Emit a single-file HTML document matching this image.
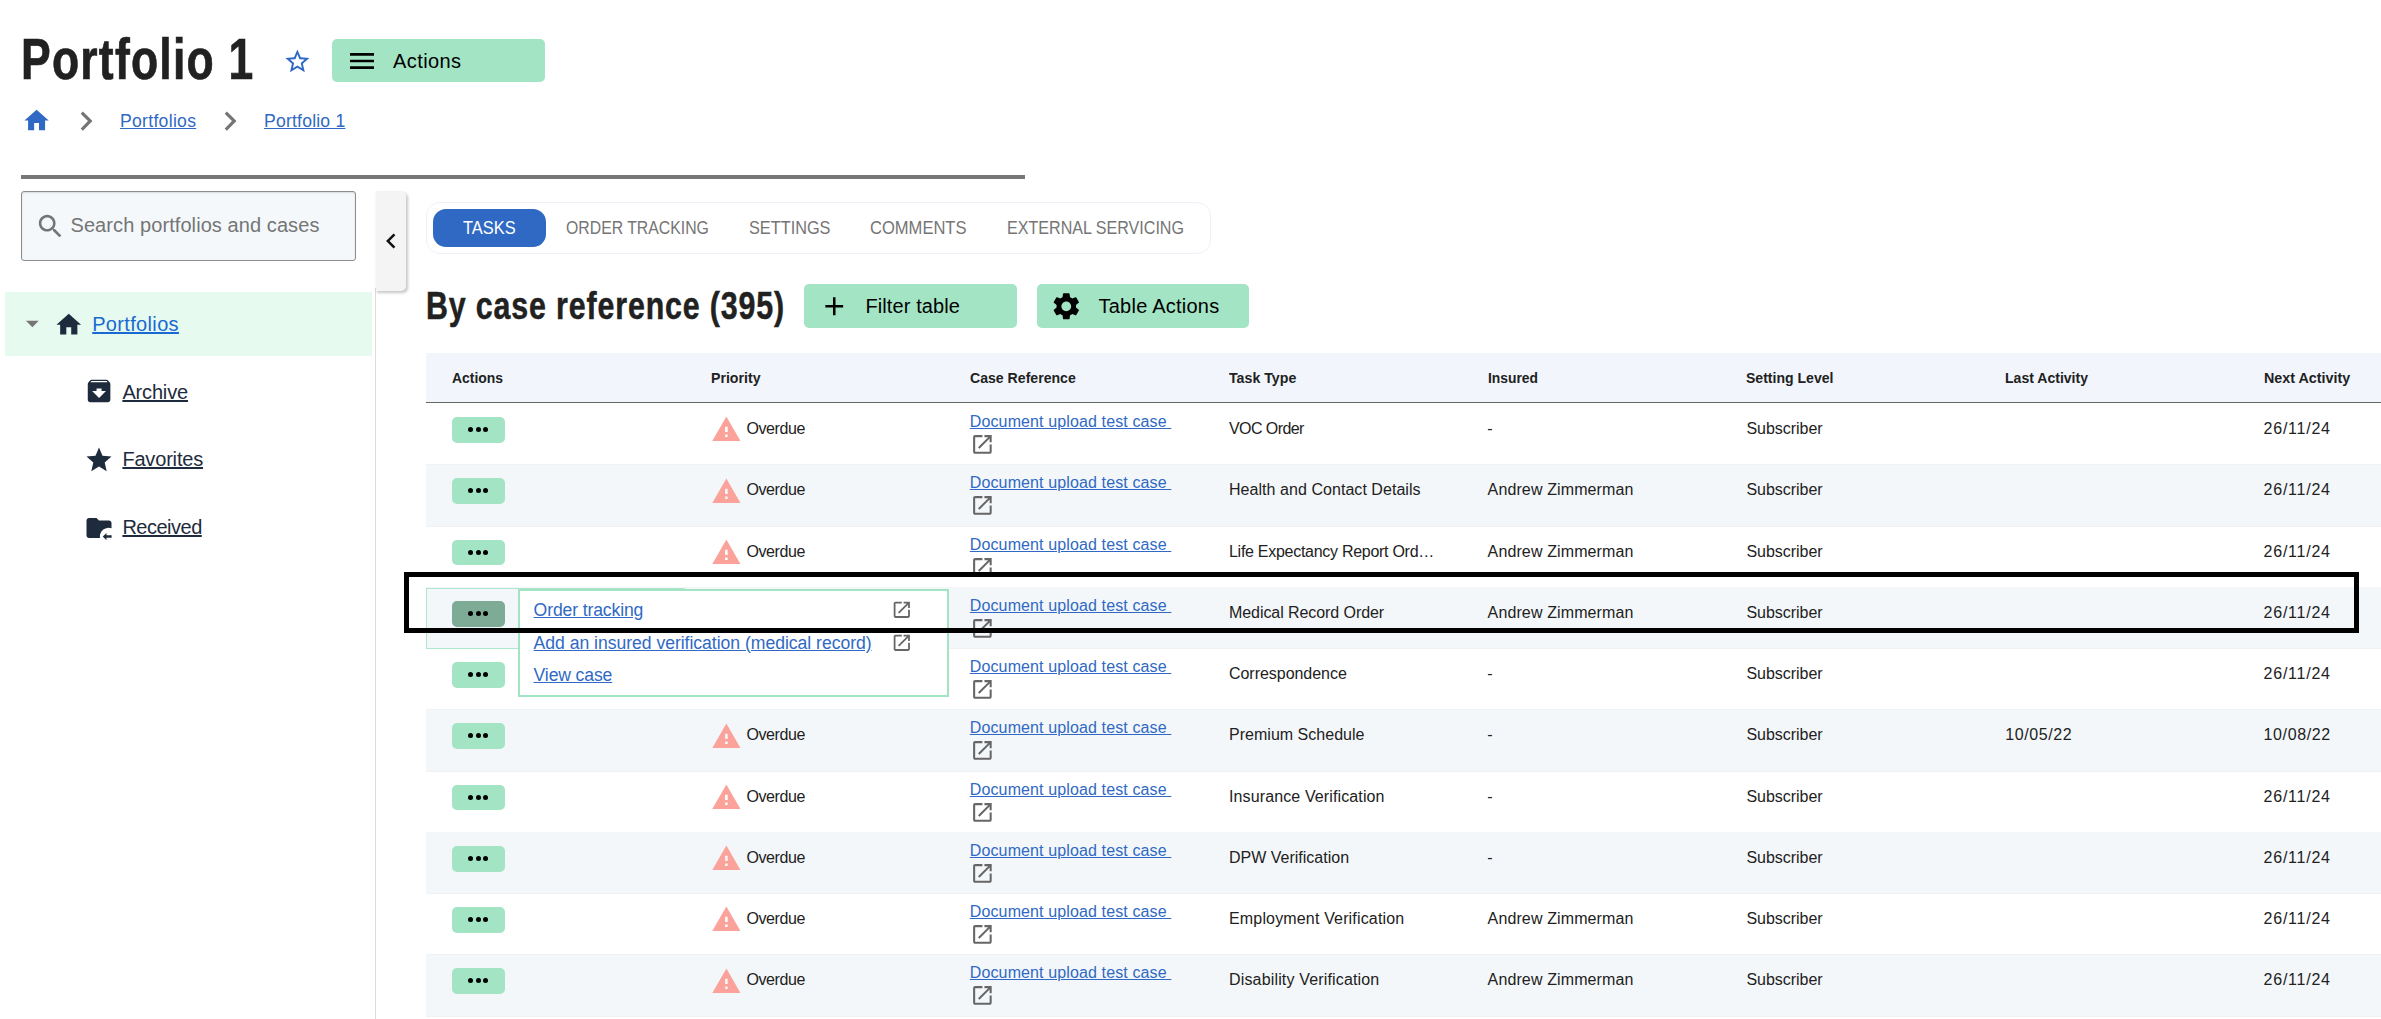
<!DOCTYPE html>
<html lang="en"><head><meta charset="utf-8"><title>Portfolio 1</title>
<style>
html,body{margin:0;padding:0;background:#fff;}
body{width:2381px;height:1019px;position:relative;overflow:hidden;font-family:"Liberation Sans", sans-serif;}
body>div,body>svg,body>span,body>a{position:absolute;display:block;box-sizing:border-box;}
span,a{white-space:pre;transform-origin:0 50%;text-decoration:none;}
a{text-decoration:underline;}
i{display:inline-block;width:0;height:0;}
</style></head><body>
<span style="left:20.5px;top:18px;font-size:58px;line-height:81px;color:#212121;font-weight:bold;transform:scaleX(0.7671);-webkit-text-stroke:0.7px #212121;letter-spacing:1.6px;">Portfolio 1</span>
<svg viewBox="0 0 24 24" style="left:282.6px;top:46.6px;width:28.8px;height:28.8px;fill:#2f69c4"><path d="M22 9.24l-7.19-.62L12 2 9.19 8.63 2 9.24l5.46 4.73L5.82 21 12 17.27 18.18 21l-1.63-7.03L22 9.24zM12 15.4l-3.76 2.27 1-4.28-3.32-2.88 4.38-.38L12 6.1l1.71 4.04 4.38.38-3.32 2.88 1 4.28L12 15.4z"/></svg>
<div style="left:332px;top:39px;width:213px;height:43px;background:#a3e4c5;border-radius:5px;"></div>
<svg viewBox="0 0 24 24" style="left:346px;top:44.5px;width:32px;height:32px;fill:#000"><path d="M3 18h18v-2H3v2zm0-5h18v-2H3v2zm0-7v2h18V6H3z"/></svg>
<span style="left:393px;top:47px;font-size:20px;line-height:28px;color:#000;letter-spacing:0.42px;">Actions</span>
<svg viewBox="0 0 24 24" style="left:21.97px;top:106.45px;width:29.16px;height:29.16px;fill:#2f69c4"><path d="M10 20v-6h4v6h5v-8h3L12 3 2 12h3v8z"/></svg>
<svg viewBox="0 0 24 24" style="left:66.92px;top:101.95px;width:38.22px;height:38.22px;fill:#757575"><path d="M10 6L8.59 7.41 13.17 12l-4.58 4.59L10 18l6-6z"/></svg>
<a style="left:120px;top:109px;font-size:17.6px;line-height:25px;color:#2f69c4;letter-spacing:0.29px;">Portfolios</a>
<svg viewBox="0 0 24 24" style="left:211.42px;top:101.95px;width:38.22px;height:38.22px;fill:#757575"><path d="M10 6L8.59 7.41 13.17 12l-4.58 4.59L10 18l6-6z"/></svg>
<a style="left:264px;top:109px;font-size:17.6px;line-height:25px;color:#2f69c4;letter-spacing:0.2px;">Portfolio 1</a>
<div style="left:21px;top:175px;width:1004px;height:3.6px;background:#777;"></div>
<div style="left:21px;top:191px;width:335px;height:70px;background:#f4f8fb;border:1px solid #8d8d8d;border-radius:3px;box-shadow:inset 0 1px 2px rgba(0,0,0,.12);"></div>
<svg viewBox="0 0 24 24" style="left:35.44px;top:211.14px;width:30.87px;height:30.87px;fill:#757575"><path d="M15.5 14h-.79l-.28-.27C15.41 12.59 16 11.11 16 9.5 16 5.91 13.09 3 9.5 3S3 5.91 3 9.5 5.91 16 9.5 16c1.61 0 3.09-.59 4.23-1.57l.27.28v.79l5 4.99L20.49 19l-4.99-5zm-6 0C7.01 14 5 11.99 5 9.5S7.01 5 9.5 5 14 7.01 14 9.5 11.99 14 9.5 14z"/></svg>
<span style="left:70.5px;top:211px;font-size:20px;line-height:28px;color:#757575;letter-spacing:0.08px;">Search portfolios and cases</span>
<div style="left:375px;top:288px;width:1px;height:731px;background:#dcdcdc;"></div>
<div style="left:376px;top:191px;width:30px;height:100px;background:#f4f4f4;border-radius:0 5px 5px 0;box-shadow:1.5px 2px 3px rgba(0,0,0,.22);"></div>
<svg viewBox="0 0 24 24" style="left:375.86px;top:225.97px;width:30.12px;height:30.12px;fill:#111"><path d="M15.41 7.41L14 6l-6 6 6 6 1.41-1.41L10.83 12z"/></svg>
<div style="left:5px;top:292px;width:367px;height:63.5px;background:#e6faf0;"></div>
<svg viewBox="0 0 24 24" style="left:16.54px;top:308.2px;width:30.72px;height:30.72px;fill:#757575"><path d="M7 10l5 5 5-5z"/></svg>
<svg viewBox="0 0 24 24" style="left:54.44px;top:310.21px;width:29.52px;height:29.52px;fill:#1e2b3c"><path d="M10 20v-6h4v6h5v-8h3L12 3 2 12h3v8z"/></svg>
<a style="left:92.2px;top:310px;font-size:20px;line-height:28px;color:#186ad2;letter-spacing:0.34px;">Portfolios</a>
<svg viewBox="0 0 24 24" style="left:84.33px;top:376.43px;width:30.13px;height:30.13px;fill:#1e2b3c"><path d="M20.54 5.23l-1.39-1.68C18.88 3.21 18.47 3 18 3H6c-.47 0-.88.21-1.16.55L3.46 5.23C3.17 5.57 3 6.02 3 6.5V19c0 1.1.9 2 2 2h14c1.1 0 2-.9 2-2V6.5c0-.48-.17-.93-.46-1.27zM12 17.5L6.5 12H10v-2h4v2h3.5L12 17.5zM5.12 5l.81-1h12l.94 1H5.12z"/></svg>
<a style="left:122.4px;top:378px;font-size:20px;line-height:28px;color:#1e2b3c;letter-spacing:-0.16px;">Archive</a>
<svg viewBox="0 0 24 24" style="left:84.4px;top:444.9px;width:30px;height:30px;fill:#1e2b3c"><path d="M12 17.27L18.18 21l-1.64-7.03L22 9.24l-7.19-.61L12 2 9.19 8.63 2 9.24l5.46 4.73L5.82 21z"/></svg>
<a style="left:122.4px;top:445px;font-size:20px;line-height:28px;color:#1e2b3c;letter-spacing:-0.18px;">Favorites</a>
<svg viewBox="0 0 24 24" style="left:84.4px;top:512.8px;width:30px;height:30px;fill:#1e2b3c"><path d="M10 4H4c-1.1 0-2 .9-2 2v12c0 1.1.9 2 2 2h8.8A7 7 0 0 1 22 12.2V8c0-1.1-.9-2-2-2h-8l-2-2z"/><path d="M22.1 17.8h-4.1v-1.9L15 18.8l3 2.9v-1.9h4.1z"/></svg>
<a style="left:122.4px;top:513px;font-size:20px;line-height:28px;color:#1e2b3c;letter-spacing:-0.5px;">Received</a>
<div style="left:426px;top:202px;width:784.5px;height:51.5px;background:#fff;border:1px solid #edf1f7;border-radius:14px;"></div>
<div style="left:433px;top:209px;width:113px;height:37.8px;background:#2f69c4;border-radius:13px;"></div>
<span style="left:463.4px;top:216px;font-size:17.6px;line-height:25px;color:#fff;transform:scaleX(0.9328);">TASKS</span>
<span style="left:565.7px;top:216px;font-size:17.6px;line-height:25px;color:#757575;transform:scaleX(0.8987);">ORDER TRACKING</span>
<span style="left:748.5px;top:216px;font-size:17.6px;line-height:25px;color:#757575;transform:scaleX(0.9263);">SETTINGS</span>
<span style="left:870px;top:216px;font-size:17.6px;line-height:25px;color:#757575;transform:scaleX(0.9403);">COMMENTS</span>
<span style="left:1006.8px;top:216px;font-size:17.6px;line-height:25px;color:#757575;transform:scaleX(0.9143);">EXTERNAL SERVICING</span>
<span style="left:425.5px;top:278px;font-size:39px;line-height:55px;color:#212121;font-weight:bold;transform:scaleX(0.7786);-webkit-text-stroke:0.5px #212121;letter-spacing:1.1px;">By case reference (395)</span>
<div style="left:804px;top:284px;width:213px;height:43.5px;background:#a3e4c5;border-radius:5px;"></div>
<svg viewBox="0 0 24 24" style="left:818.74px;top:290.84px;width:30.51px;height:30.51px;fill:#000"><path d="M19 13h-6v6h-2v-6H5v-2h6V5h2v6h6v2z"/></svg>
<span style="left:865.5px;top:292px;font-size:20px;line-height:28px;color:#000;letter-spacing:0.09px;">Filter table</span>
<div style="left:1037px;top:284px;width:212px;height:43.5px;background:#a3e4c5;border-radius:5px;"></div>
<svg viewBox="0 0 24 24" style="left:1050.21px;top:289.98px;width:32.59px;height:32.59px;fill:#000"><path d="M19.14 12.94c.04-.3.06-.61.06-.94 0-.32-.02-.64-.07-.94l2.03-1.58c.18-.14.23-.41.12-.61l-1.92-3.32c-.12-.22-.37-.29-.59-.22l-2.39.96c-.5-.38-1.03-.7-1.62-.94l-.36-2.54c-.04-.24-.24-.41-.48-.41h-3.84c-.24 0-.43.17-.47.41l-.36 2.54c-.59.24-1.13.57-1.62.94l-2.39-.96c-.22-.08-.47 0-.59.22L2.74 8.87c-.12.21-.08.47.12.61l2.03 1.58c-.05.3-.09.63-.09.94s.02.64.07.94l-2.03 1.58c-.18.14-.23.41-.12.61l1.92 3.32c.12.22.37.29.59.22l2.39-.96c.5.38 1.03.7 1.62.94l.36 2.54c.05.24.24.41.48.41h3.84c.24 0 .44-.17.47-.41l.36-2.54c.59-.24 1.13-.56 1.62-.94l2.39.96c.22.08.47 0 .59-.22l1.92-3.32c.12-.22.07-.47-.12-.61l-2.01-1.58zM12 15.6c-1.98 0-3.6-1.62-3.6-3.6s1.62-3.6 3.6-3.6 3.6 1.62 3.6 3.6-1.62 3.6-3.6 3.6z"/></svg>
<span style="left:1098.5px;top:292px;font-size:20px;line-height:28px;color:#000;letter-spacing:0.24px;">Table Actions</span>
<div style="left:426px;top:353px;width:1955px;height:49.5px;background:#f2f6fc;"></div>
<div style="left:426px;top:402px;width:1955px;height:1px;background:#666;"></div>
<span style="left:452.3px;top:367px;font-size:15px;line-height:21px;color:#212121;font-weight:bold;transform:scaleX(0.9270);">Actions</span>
<span style="left:711px;top:367px;font-size:15px;line-height:21px;color:#212121;font-weight:bold;transform:scaleX(0.9426);">Priority</span>
<span style="left:970px;top:367px;font-size:15px;line-height:21px;color:#212121;font-weight:bold;transform:scaleX(0.9398);">Case Reference</span>
<span style="left:1229px;top:367px;font-size:15px;line-height:21px;color:#212121;font-weight:bold;transform:scaleX(0.9460);">Task Type</span>
<span style="left:1487.6px;top:367px;font-size:15px;line-height:21px;color:#212121;font-weight:bold;transform:scaleX(0.9227);">Insured</span>
<span style="left:1746.4px;top:367px;font-size:15px;line-height:21px;color:#212121;font-weight:bold;transform:scaleX(0.9362);">Setting Level</span>
<span style="left:2005.2px;top:367px;font-size:15px;line-height:21px;color:#212121;font-weight:bold;transform:scaleX(0.9364);">Last Activity</span>
<span style="left:2263.6px;top:367px;font-size:15px;line-height:21px;color:#212121;font-weight:bold;transform:scaleX(0.9534);">Next Activity</span>
<div style="left:426px;top:464.35px;width:1955px;height:1px;background:#f0f1f3;"></div>
<div style="left:426px;top:464.85px;width:1955px;height:61.25px;background:#f4f7fa;"></div>
<div style="left:426px;top:525.6px;width:1955px;height:1px;background:#f0f1f3;"></div>
<div style="left:426px;top:586.85px;width:1955px;height:1px;background:#f0f1f3;"></div>
<div style="left:426px;top:587.35px;width:1955px;height:61.25px;background:#f4f7fa;"></div>
<div style="left:426px;top:648.1px;width:1955px;height:1px;background:#f0f1f3;"></div>
<div style="left:426px;top:709.35px;width:1955px;height:1px;background:#f0f1f3;"></div>
<div style="left:426px;top:709.85px;width:1955px;height:61.25px;background:#f4f7fa;"></div>
<div style="left:426px;top:770.6px;width:1955px;height:1px;background:#f0f1f3;"></div>
<div style="left:426px;top:831.85px;width:1955px;height:1px;background:#f0f1f3;"></div>
<div style="left:426px;top:832.35px;width:1955px;height:61.25px;background:#f4f7fa;"></div>
<div style="left:426px;top:893.1px;width:1955px;height:1px;background:#f0f1f3;"></div>
<div style="left:426px;top:954.35px;width:1955px;height:1px;background:#f0f1f3;"></div>
<div style="left:426px;top:954.85px;width:1955px;height:61.25px;background:#f4f7fa;"></div>
<div style="left:426px;top:1015.6px;width:1955px;height:1px;background:#f0f1f3;"></div>
<div style="left:452px;top:417px;width:53px;height:25.8px;background:#a3e4c5;border-radius:5px;"></div>
<div style="left:468.2px;top:427.2px;width:5px;height:5px;background:#000;border-radius:50%;"></div>
<div style="left:475.75px;top:427.2px;width:5px;height:5px;background:#000;border-radius:50%;"></div>
<div style="left:483.3px;top:427.2px;width:5px;height:5px;background:#000;border-radius:50%;"></div>
<svg viewBox="0 0 24 24" style="left:710.52px;top:414.34px;width:30.76px;height:30.76px;fill:#fba29a"><path d="M1 21h22L12 2 1 21zm12-3h-2v-2h2v2zm0-4h-2v-4h2v4z"/></svg>
<span style="left:746.4px;top:418px;font-size:16px;line-height:22px;color:#212121;letter-spacing:-0.4px;">Overdue</span>
<a style="left:969.8px;top:411px;font-size:16px;line-height:22px;color:#2f69c4;letter-spacing:0.12px;">Document upload test case </a>
<svg viewBox="0 0 24 24" style="left:969.7px;top:432px;width:24.8px;height:24.8px;fill:#666"><path d="M19 19H5V5h7V3H5c-1.11 0-2 .9-2 2v14c0 1.1.89 2 2 2h14c1.1 0 2-.9 2-2v-7h-2v7zM14 3v2h3.59l-9.83 9.83 1.41 1.41L19 6.41V10h2V3h-7z"/></svg>
<span style="left:1229px;top:418px;font-size:16px;line-height:22px;color:#212121;letter-spacing:-0.58px;">VOC Order</span>
<span style="left:1487.3px;top:418px;font-size:16px;line-height:22px;color:#212121;">-</span>
<span style="left:1746.4px;top:418px;font-size:16px;line-height:22px;color:#212121;letter-spacing:-0.02px;">Subscriber</span>
<span style="left:2263.6px;top:418px;font-size:16px;line-height:22px;color:#212121;letter-spacing:0.76px;">26/11/24</span>
<div style="left:452px;top:478.25px;width:53px;height:25.8px;background:#a3e4c5;border-radius:5px;"></div>
<div style="left:468.2px;top:488.45px;width:5px;height:5px;background:#000;border-radius:50%;"></div>
<div style="left:475.75px;top:488.45px;width:5px;height:5px;background:#000;border-radius:50%;"></div>
<div style="left:483.3px;top:488.45px;width:5px;height:5px;background:#000;border-radius:50%;"></div>
<svg viewBox="0 0 24 24" style="left:710.52px;top:475.59px;width:30.76px;height:30.76px;fill:#fba29a"><path d="M1 21h22L12 2 1 21zm12-3h-2v-2h2v2zm0-4h-2v-4h2v4z"/></svg>
<span style="left:746.4px;top:479px;font-size:16px;line-height:22px;color:#212121;letter-spacing:-0.4px;">Overdue</span>
<a style="left:969.8px;top:472px;font-size:16px;line-height:22px;color:#2f69c4;letter-spacing:0.12px;">Document upload test case </a>
<svg viewBox="0 0 24 24" style="left:969.7px;top:493.25px;width:24.8px;height:24.8px;fill:#666"><path d="M19 19H5V5h7V3H5c-1.11 0-2 .9-2 2v14c0 1.1.89 2 2 2h14c1.1 0 2-.9 2-2v-7h-2v7zM14 3v2h3.59l-9.83 9.83 1.41 1.41L19 6.41V10h2V3h-7z"/></svg>
<span style="left:1229px;top:479px;font-size:16px;line-height:22px;color:#212121;letter-spacing:0.05px;">Health and Contact Details</span>
<span style="left:1487.6px;top:479px;font-size:16px;line-height:22px;color:#212121;letter-spacing:0.12px;">Andrew Zimmerman</span>
<span style="left:1746.4px;top:479px;font-size:16px;line-height:22px;color:#212121;letter-spacing:-0.02px;">Subscriber</span>
<span style="left:2263.6px;top:479px;font-size:16px;line-height:22px;color:#212121;letter-spacing:0.76px;">26/11/24</span>
<div style="left:452px;top:539.5px;width:53px;height:25.8px;background:#a3e4c5;border-radius:5px;"></div>
<div style="left:468.2px;top:549.7px;width:5px;height:5px;background:#000;border-radius:50%;"></div>
<div style="left:475.75px;top:549.7px;width:5px;height:5px;background:#000;border-radius:50%;"></div>
<div style="left:483.3px;top:549.7px;width:5px;height:5px;background:#000;border-radius:50%;"></div>
<svg viewBox="0 0 24 24" style="left:710.52px;top:536.84px;width:30.76px;height:30.76px;fill:#fba29a"><path d="M1 21h22L12 2 1 21zm12-3h-2v-2h2v2zm0-4h-2v-4h2v4z"/></svg>
<span style="left:746.4px;top:541px;font-size:16px;line-height:22px;color:#212121;letter-spacing:-0.4px;">Overdue</span>
<a style="left:969.8px;top:534px;font-size:16px;line-height:22px;color:#2f69c4;letter-spacing:0.12px;">Document upload test case </a>
<svg viewBox="0 0 24 24" style="left:969.7px;top:554.5px;width:24.8px;height:24.8px;fill:#666"><path d="M19 19H5V5h7V3H5c-1.11 0-2 .9-2 2v14c0 1.1.89 2 2 2h14c1.1 0 2-.9 2-2v-7h-2v7zM14 3v2h3.59l-9.83 9.83 1.41 1.41L19 6.41V10h2V3h-7z"/></svg>
<span style="left:1229px;top:541px;font-size:16px;line-height:22px;color:#212121;letter-spacing:-0.28px;">Life Expectancy Report Ord…</span>
<span style="left:1487.6px;top:541px;font-size:16px;line-height:22px;color:#212121;letter-spacing:0.12px;">Andrew Zimmerman</span>
<span style="left:1746.4px;top:541px;font-size:16px;line-height:22px;color:#212121;letter-spacing:-0.02px;">Subscriber</span>
<span style="left:2263.6px;top:541px;font-size:16px;line-height:22px;color:#212121;letter-spacing:0.76px;">26/11/24</span>
<div style="left:426px;top:587.5px;width:259px;height:1.6px;background:#ade7cb;"></div>
<div style="left:426px;top:587.5px;width:1px;height:61.2px;background:#ade7cb;"></div>
<div style="left:426px;top:647.6px;width:259px;height:1.1px;background:#ade7cb;"></div>
<div style="left:452px;top:600.75px;width:53px;height:25.8px;background:#7eab95;border-radius:5px;"></div>
<div style="left:468.2px;top:610.95px;width:5px;height:5px;background:#000;border-radius:50%;"></div>
<div style="left:475.75px;top:610.95px;width:5px;height:5px;background:#000;border-radius:50%;"></div>
<div style="left:483.3px;top:610.95px;width:5px;height:5px;background:#000;border-radius:50%;"></div>
<a style="left:969.8px;top:595px;font-size:16px;line-height:22px;color:#2f69c4;letter-spacing:0.12px;">Document upload test case </a>
<svg viewBox="0 0 24 24" style="left:969.7px;top:615.75px;width:24.8px;height:24.8px;fill:#666"><path d="M19 19H5V5h7V3H5c-1.11 0-2 .9-2 2v14c0 1.1.89 2 2 2h14c1.1 0 2-.9 2-2v-7h-2v7zM14 3v2h3.59l-9.83 9.83 1.41 1.41L19 6.41V10h2V3h-7z"/></svg>
<span style="left:1229px;top:602px;font-size:16px;line-height:22px;color:#212121;letter-spacing:-0.07px;">Medical Record Order</span>
<span style="left:1487.6px;top:602px;font-size:16px;line-height:22px;color:#212121;letter-spacing:0.12px;">Andrew Zimmerman</span>
<span style="left:1746.4px;top:602px;font-size:16px;line-height:22px;color:#212121;letter-spacing:-0.02px;">Subscriber</span>
<span style="left:2263.6px;top:602px;font-size:16px;line-height:22px;color:#212121;letter-spacing:0.76px;">26/11/24</span>
<div style="left:452px;top:662px;width:53px;height:25.8px;background:#a3e4c5;border-radius:5px;"></div>
<div style="left:468.2px;top:672.2px;width:5px;height:5px;background:#000;border-radius:50%;"></div>
<div style="left:475.75px;top:672.2px;width:5px;height:5px;background:#000;border-radius:50%;"></div>
<div style="left:483.3px;top:672.2px;width:5px;height:5px;background:#000;border-radius:50%;"></div>
<a style="left:969.8px;top:656px;font-size:16px;line-height:22px;color:#2f69c4;letter-spacing:0.12px;">Document upload test case </a>
<svg viewBox="0 0 24 24" style="left:969.7px;top:677px;width:24.8px;height:24.8px;fill:#666"><path d="M19 19H5V5h7V3H5c-1.11 0-2 .9-2 2v14c0 1.1.89 2 2 2h14c1.1 0 2-.9 2-2v-7h-2v7zM14 3v2h3.59l-9.83 9.83 1.41 1.41L19 6.41V10h2V3h-7z"/></svg>
<span style="left:1229px;top:663px;font-size:16px;line-height:22px;color:#212121;letter-spacing:-0.04px;">Correspondence</span>
<span style="left:1487.3px;top:663px;font-size:16px;line-height:22px;color:#212121;">-</span>
<span style="left:1746.4px;top:663px;font-size:16px;line-height:22px;color:#212121;letter-spacing:-0.02px;">Subscriber</span>
<span style="left:2263.6px;top:663px;font-size:16px;line-height:22px;color:#212121;letter-spacing:0.76px;">26/11/24</span>
<div style="left:452px;top:723.25px;width:53px;height:25.8px;background:#a3e4c5;border-radius:5px;"></div>
<div style="left:468.2px;top:733.45px;width:5px;height:5px;background:#000;border-radius:50%;"></div>
<div style="left:475.75px;top:733.45px;width:5px;height:5px;background:#000;border-radius:50%;"></div>
<div style="left:483.3px;top:733.45px;width:5px;height:5px;background:#000;border-radius:50%;"></div>
<svg viewBox="0 0 24 24" style="left:710.52px;top:720.59px;width:30.76px;height:30.76px;fill:#fba29a"><path d="M1 21h22L12 2 1 21zm12-3h-2v-2h2v2zm0-4h-2v-4h2v4z"/></svg>
<span style="left:746.4px;top:724px;font-size:16px;line-height:22px;color:#212121;letter-spacing:-0.4px;">Overdue</span>
<a style="left:969.8px;top:717px;font-size:16px;line-height:22px;color:#2f69c4;letter-spacing:0.12px;">Document upload test case </a>
<svg viewBox="0 0 24 24" style="left:969.7px;top:738.25px;width:24.8px;height:24.8px;fill:#666"><path d="M19 19H5V5h7V3H5c-1.11 0-2 .9-2 2v14c0 1.1.89 2 2 2h14c1.1 0 2-.9 2-2v-7h-2v7zM14 3v2h3.59l-9.83 9.83 1.41 1.41L19 6.41V10h2V3h-7z"/></svg>
<span style="left:1229px;top:724px;font-size:16px;line-height:22px;color:#212121;letter-spacing:0.02px;">Premium Schedule</span>
<span style="left:1487.3px;top:724px;font-size:16px;line-height:22px;color:#212121;">-</span>
<span style="left:1746.4px;top:724px;font-size:16px;line-height:22px;color:#212121;letter-spacing:-0.02px;">Subscriber</span>
<span style="left:2005.2px;top:724px;font-size:16px;line-height:22px;color:#212121;letter-spacing:0.61px;">10/05/22</span>
<span style="left:2263.6px;top:724px;font-size:16px;line-height:22px;color:#212121;letter-spacing:0.61px;">10/08/22</span>
<div style="left:452px;top:784.5px;width:53px;height:25.8px;background:#a3e4c5;border-radius:5px;"></div>
<div style="left:468.2px;top:794.7px;width:5px;height:5px;background:#000;border-radius:50%;"></div>
<div style="left:475.75px;top:794.7px;width:5px;height:5px;background:#000;border-radius:50%;"></div>
<div style="left:483.3px;top:794.7px;width:5px;height:5px;background:#000;border-radius:50%;"></div>
<svg viewBox="0 0 24 24" style="left:710.52px;top:781.84px;width:30.76px;height:30.76px;fill:#fba29a"><path d="M1 21h22L12 2 1 21zm12-3h-2v-2h2v2zm0-4h-2v-4h2v4z"/></svg>
<span style="left:746.4px;top:786px;font-size:16px;line-height:22px;color:#212121;letter-spacing:-0.4px;">Overdue</span>
<a style="left:969.8px;top:779px;font-size:16px;line-height:22px;color:#2f69c4;letter-spacing:0.12px;">Document upload test case </a>
<svg viewBox="0 0 24 24" style="left:969.7px;top:799.5px;width:24.8px;height:24.8px;fill:#666"><path d="M19 19H5V5h7V3H5c-1.11 0-2 .9-2 2v14c0 1.1.89 2 2 2h14c1.1 0 2-.9 2-2v-7h-2v7zM14 3v2h3.59l-9.83 9.83 1.41 1.41L19 6.41V10h2V3h-7z"/></svg>
<span style="left:1229px;top:786px;font-size:16px;line-height:22px;color:#212121;letter-spacing:0.12px;">Insurance Verification</span>
<span style="left:1487.3px;top:786px;font-size:16px;line-height:22px;color:#212121;">-</span>
<span style="left:1746.4px;top:786px;font-size:16px;line-height:22px;color:#212121;letter-spacing:-0.02px;">Subscriber</span>
<span style="left:2263.6px;top:786px;font-size:16px;line-height:22px;color:#212121;letter-spacing:0.76px;">26/11/24</span>
<div style="left:452px;top:845.75px;width:53px;height:25.8px;background:#a3e4c5;border-radius:5px;"></div>
<div style="left:468.2px;top:855.95px;width:5px;height:5px;background:#000;border-radius:50%;"></div>
<div style="left:475.75px;top:855.95px;width:5px;height:5px;background:#000;border-radius:50%;"></div>
<div style="left:483.3px;top:855.95px;width:5px;height:5px;background:#000;border-radius:50%;"></div>
<svg viewBox="0 0 24 24" style="left:710.52px;top:843.09px;width:30.76px;height:30.76px;fill:#fba29a"><path d="M1 21h22L12 2 1 21zm12-3h-2v-2h2v2zm0-4h-2v-4h2v4z"/></svg>
<span style="left:746.4px;top:847px;font-size:16px;line-height:22px;color:#212121;letter-spacing:-0.4px;">Overdue</span>
<a style="left:969.8px;top:840px;font-size:16px;line-height:22px;color:#2f69c4;letter-spacing:0.12px;">Document upload test case </a>
<svg viewBox="0 0 24 24" style="left:969.7px;top:860.75px;width:24.8px;height:24.8px;fill:#666"><path d="M19 19H5V5h7V3H5c-1.11 0-2 .9-2 2v14c0 1.1.89 2 2 2h14c1.1 0 2-.9 2-2v-7h-2v7zM14 3v2h3.59l-9.83 9.83 1.41 1.41L19 6.41V10h2V3h-7z"/></svg>
<span style="left:1229px;top:847px;font-size:16px;line-height:22px;color:#212121;letter-spacing:-0px;">DPW Verification</span>
<span style="left:1487.3px;top:847px;font-size:16px;line-height:22px;color:#212121;">-</span>
<span style="left:1746.4px;top:847px;font-size:16px;line-height:22px;color:#212121;letter-spacing:-0.02px;">Subscriber</span>
<span style="left:2263.6px;top:847px;font-size:16px;line-height:22px;color:#212121;letter-spacing:0.76px;">26/11/24</span>
<div style="left:452px;top:907px;width:53px;height:25.8px;background:#a3e4c5;border-radius:5px;"></div>
<div style="left:468.2px;top:917.2px;width:5px;height:5px;background:#000;border-radius:50%;"></div>
<div style="left:475.75px;top:917.2px;width:5px;height:5px;background:#000;border-radius:50%;"></div>
<div style="left:483.3px;top:917.2px;width:5px;height:5px;background:#000;border-radius:50%;"></div>
<svg viewBox="0 0 24 24" style="left:710.52px;top:904.34px;width:30.76px;height:30.76px;fill:#fba29a"><path d="M1 21h22L12 2 1 21zm12-3h-2v-2h2v2zm0-4h-2v-4h2v4z"/></svg>
<span style="left:746.4px;top:908px;font-size:16px;line-height:22px;color:#212121;letter-spacing:-0.4px;">Overdue</span>
<a style="left:969.8px;top:901px;font-size:16px;line-height:22px;color:#2f69c4;letter-spacing:0.12px;">Document upload test case </a>
<svg viewBox="0 0 24 24" style="left:969.7px;top:922px;width:24.8px;height:24.8px;fill:#666"><path d="M19 19H5V5h7V3H5c-1.11 0-2 .9-2 2v14c0 1.1.89 2 2 2h14c1.1 0 2-.9 2-2v-7h-2v7zM14 3v2h3.59l-9.83 9.83 1.41 1.41L19 6.41V10h2V3h-7z"/></svg>
<span style="left:1229px;top:908px;font-size:16px;line-height:22px;color:#212121;letter-spacing:0.16px;">Employment Verification</span>
<span style="left:1487.6px;top:908px;font-size:16px;line-height:22px;color:#212121;letter-spacing:0.12px;">Andrew Zimmerman</span>
<span style="left:1746.4px;top:908px;font-size:16px;line-height:22px;color:#212121;letter-spacing:-0.02px;">Subscriber</span>
<span style="left:2263.6px;top:908px;font-size:16px;line-height:22px;color:#212121;letter-spacing:0.76px;">26/11/24</span>
<div style="left:452px;top:968.25px;width:53px;height:25.8px;background:#a3e4c5;border-radius:5px;"></div>
<div style="left:468.2px;top:978.45px;width:5px;height:5px;background:#000;border-radius:50%;"></div>
<div style="left:475.75px;top:978.45px;width:5px;height:5px;background:#000;border-radius:50%;"></div>
<div style="left:483.3px;top:978.45px;width:5px;height:5px;background:#000;border-radius:50%;"></div>
<svg viewBox="0 0 24 24" style="left:710.52px;top:965.59px;width:30.76px;height:30.76px;fill:#fba29a"><path d="M1 21h22L12 2 1 21zm12-3h-2v-2h2v2zm0-4h-2v-4h2v4z"/></svg>
<span style="left:746.4px;top:969px;font-size:16px;line-height:22px;color:#212121;letter-spacing:-0.4px;">Overdue</span>
<a style="left:969.8px;top:962px;font-size:16px;line-height:22px;color:#2f69c4;letter-spacing:0.12px;">Document upload test case </a>
<svg viewBox="0 0 24 24" style="left:969.7px;top:983.25px;width:24.8px;height:24.8px;fill:#666"><path d="M19 19H5V5h7V3H5c-1.11 0-2 .9-2 2v14c0 1.1.89 2 2 2h14c1.1 0 2-.9 2-2v-7h-2v7zM14 3v2h3.59l-9.83 9.83 1.41 1.41L19 6.41V10h2V3h-7z"/></svg>
<span style="left:1229px;top:969px;font-size:16px;line-height:22px;color:#212121;letter-spacing:0.16px;">Disability Verification</span>
<span style="left:1487.6px;top:969px;font-size:16px;line-height:22px;color:#212121;letter-spacing:0.12px;">Andrew Zimmerman</span>
<span style="left:1746.4px;top:969px;font-size:16px;line-height:22px;color:#212121;letter-spacing:-0.02px;">Subscriber</span>
<span style="left:2263.6px;top:969px;font-size:16px;line-height:22px;color:#212121;letter-spacing:0.76px;">26/11/24</span>
<div style="left:518px;top:588.8px;width:431px;height:108.1px;background:#fff;border:2px solid #a3e4c5;"></div>
<a style="left:533.6px;top:598px;font-size:17.6px;line-height:25px;color:#2f69c4;letter-spacing:-0.13px;">Order tracking</a>
<a style="left:533.6px;top:631px;font-size:17.6px;line-height:25px;color:#2f69c4;letter-spacing:-0.03px;">Add an insured verification (medical record)</a>
<a style="left:533.6px;top:663px;font-size:17.6px;line-height:25px;color:#2f69c4;letter-spacing:-0.14px;">View case</a>
<svg viewBox="0 0 24 24" style="left:890.7px;top:599.4px;width:21.6px;height:21.6px;fill:#666"><path d="M19 19H5V5h7V3H5c-1.11 0-2 .9-2 2v14c0 1.1.89 2 2 2h14c1.1 0 2-.9 2-2v-7h-2v7zM14 3v2h3.59l-9.83 9.83 1.41 1.41L19 6.41V10h2V3h-7z"/></svg>
<svg viewBox="0 0 24 24" style="left:890.7px;top:632.4px;width:21.6px;height:21.6px;fill:#666"><path d="M19 19H5V5h7V3H5c-1.11 0-2 .9-2 2v14c0 1.1.89 2 2 2h14c1.1 0 2-.9 2-2v-7h-2v7zM14 3v2h3.59l-9.83 9.83 1.41 1.41L19 6.41V10h2V3h-7z"/></svg>
<div style="left:404px;top:572px;width:1955px;height:61px;border:5px solid #000;"></div>
</body></html>
